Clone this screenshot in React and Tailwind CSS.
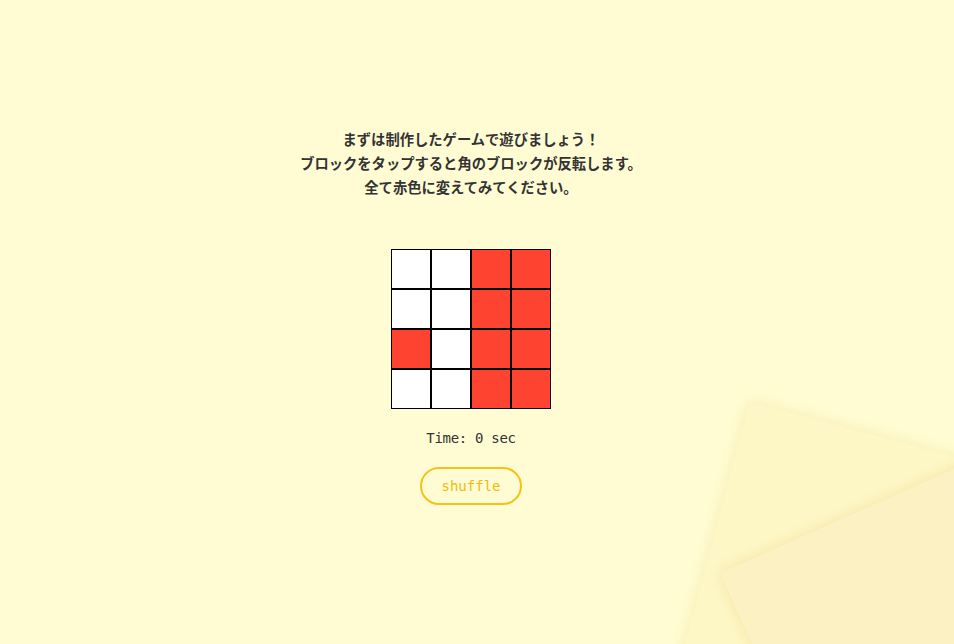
import React from "react";

const grid = [
  [0, 0, 1, 1],
  [0, 0, 1, 1],
  [1, 0, 1, 1],
  [0, 0, 1, 1],
];

export default function App() {
  return (
    <div className="relative w-full h-[644px] overflow-hidden bg-[#fffcd3]">
      {/* decorative papers */}
      <div className="absolute left-[750px] top-[402px] w-[420px] h-[420px] origin-top-left rotate-[15deg] bg-[#fdf7c6] shadow-[0_0_14px_rgba(240,225,150,0.6)]" />
      <div className="absolute left-[720px] top-[573px] w-[420px] h-[420px] origin-top-left rotate-[-24deg] bg-[#fcf1c3] shadow-[0_0_14px_rgba(240,215,140,0.6)]" />

      <div className="relative flex flex-col items-center pt-[127px] pr-[12px]">
        <div
          className="text-center text-[14.3px] leading-[24px] font-bold text-[#333333]"
          style={{ fontFamily: '"Noto Sans CJK JP", "Noto Sans", sans-serif' }}
        >
          <p>まずは制作したゲームで遊びましょう！</p>
          <p>ブロックをタップすると角のブロックが反転します。</p>
          <p>全て赤色に変えてみてください。</p>
        </div>

        <div className="mt-[50px] flex flex-col">
          {grid.map((row, i) => (
            <div key={i} className="flex">
              {row.map((c, j) => (
                <div
                  key={j}
                  className={
                    c
                      ? "w-10 h-10 border border-black bg-[#ff4331]"
                      : "w-10 h-10 border border-black bg-white"
                  }
                />
              ))}
            </div>
          ))}
        </div>

        <p
          className="mt-[19px] text-[14px] leading-[20px] text-[#333333] tracking-[-0.3px]"
          style={{ fontFamily: '"DejaVu Sans Mono", monospace' }}
        >
          Time: 0 sec
        </p>

        <button
          className="mt-[19px] w-[102px] h-[38px] rounded-full border-2 border-[#f5c21b] text-[#f2b90d] text-[14px]"
          style={{ fontFamily: '"DejaVu Sans Mono", monospace' }}
        >
          shuffle
        </button>
      </div>
    </div>
  );
}
